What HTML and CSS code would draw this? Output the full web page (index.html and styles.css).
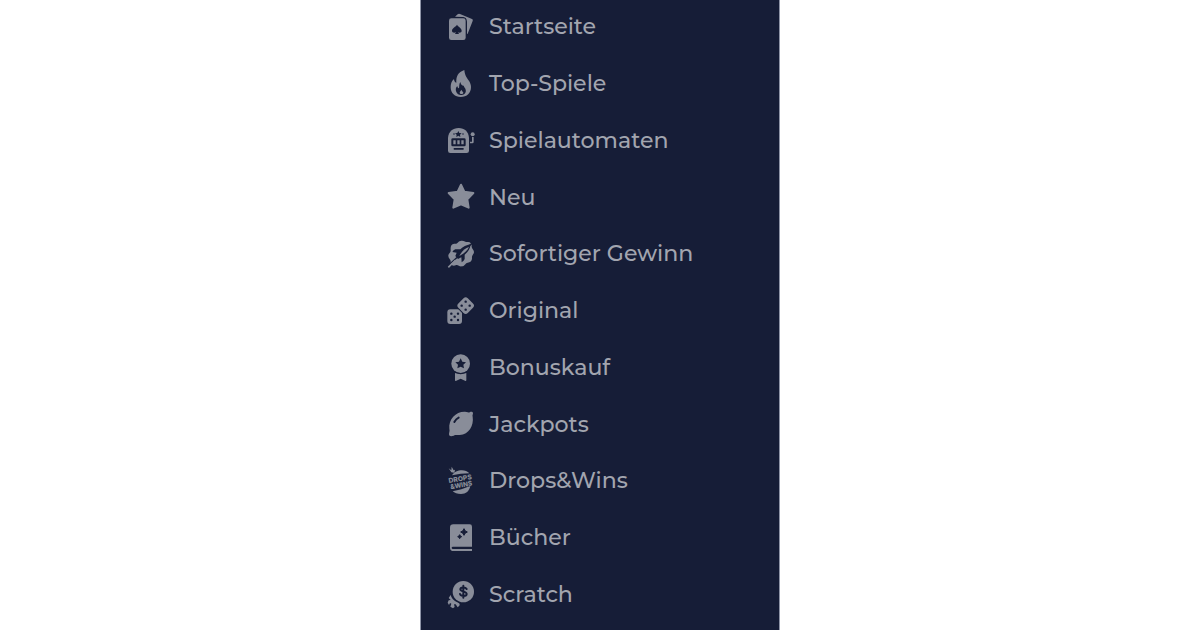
FILE: index.html
```html
<!DOCTYPE html>
<html lang="de">
<head>
  <meta charset="UTF-8">
  <title>Casino Menü</title>
  <link rel="stylesheet" href="styles.css">
</head>
<body>

  <nav class="sidebar">
    <a class="item startseite">
      <svg class="icon" viewBox="0 0 132 132">
        <path d="M45 35L53 28Q56 25 60 27L96 42Q100 44 98 48L83 86Q81 89 81 85V50Q80 37 70 36Z"/>
        <rect x="27" y="40" width="50" height="65" rx="7"/>
        <path class="cut" d="M51 59C54 65 65 69 65 77C65 84 56 84 54 81L57 87H45L48 81C45 84 36 84 36 77C36 69 48 65 51 59Z"/>
      </svg>
      <span>Startseite</span>
    </a>
    <a class="item top-spiele">
      <svg class="icon" viewBox="0 0 132 132">
        <path d="M73 24C54 31 48 43 49 62C44 61 42 55 42 51C34 57 32 66 32 76C32 94 45 105 62 105C81 105 93 93 93 75C93 61 84 54 79 45C75 38 74 32 73 24Z"/>
        <path class="cut" d="M61 60C57 66 58 74 57 79C54 78 52 75 52 72C47 77 46 83 49 90C52 97 58 100 65 99C74 98 79 91 77 83C76 77 72 76 71 71C66 71 62 67 61 60Z"/>
        <path d="M64 83C63 87 59 88 59 92C59 97 70 97 70 92C70 89 67 89 64 83Z"/>
      </svg>
      <span>Top-Spiele</span>
    </a>
    <a class="item spielautomaten">
      <svg class="icon" viewBox="0 0 132 132">
        <path d="M24 56C26 38 38 27 56 27C74 27 85 38 87 56V95Q87 102 80 102H31Q24 102 24 95Z"/>
        <path class="cut" d="M55 36L58 42L65 43L60 47L61 54L55 50L49 54L50 47L45 43L52 42Z"/>
        <circle class="cut" cx="42" cy="45" r="2.2"/>
        <circle class="cut" cx="69" cy="45" r="2.2"/>
        <rect class="cut" x="34" y="58" width="43" height="24" rx="4"/>
        <path d="M40 64h7v12h-7zM52 64h7v12h-7zM64 64h7v12h-7z"/>
        <rect class="cut" x="41" y="87" width="30" height="5" rx="1"/>
        <circle cx="98" cy="46" r="6"/>
        <path d="M96 54h5v15q0 4-4 4h-7v-5h6z"/>
      </svg>
      <span>Spielautomaten</span>
    </a>
    <a class="item neu">
      <svg class="icon" viewBox="0 0 132 132">
        <path class="round" d="M63 29L73 50L100 54L82 73L86 98L63 88L40 98L44 73L26 54L53 50Z"/>
      </svg>
      <span>Neu</span>
    </a>
    <a class="item sofort">
      <svg class="icon" viewBox="0 0 132 132">
        <path d="M44 35C52 37 54 27 64 26C73 25 77 31 83 30C91 29 96 36 95 43C94 50 102 52 102 60C102 67 95 69 96 77C97 86 91 92 83 92C77 92 75 102 66 103C58 105 54 97 47 100C38 104 30 97 32 88C33 83 24 79 25 70C26 63 33 62 32 54C31 43 34 34 44 35Z"/>
        <path class="cut" d="M92 36C79 39 69 44 61 52H46Q40 54 37 60L50 62L46 72L54 81L64 76L65 91Q72 87 74 81L74 68C84 60 91 50 92 36Z"/>
        <path d="M87 45C77 48 68 55 60 68L58 72L62 70C74 63 82 55 87 45Z"/>
        <path class="slash" d="M98 32L90 40M50 77L23 102"/>
        <path class="trail" d="M47 84L25 106"/>
      </svg>
      <span>Sofortiger Gewinn</span>
    </a>
    <a class="item original">
      <svg class="icon" viewBox="0 0 132 132">
        <rect x="22" y="61" width="44" height="44" rx="9"/>
        <rect x="57" y="30" width="40" height="40" rx="9" class="edge" transform="rotate(45 77 50)"/>
        <g class="cut">
          <circle cx="34" cy="74" r="3.6"/>
          <circle cx="54" cy="74" r="3.6"/>
          <circle cx="44" cy="83" r="3.6"/>
          <circle cx="34" cy="93" r="3.6"/>
          <circle cx="54" cy="93" r="3.6"/>
          <circle cx="77" cy="38" r="3.6"/>
          <circle cx="65" cy="50" r="3.6"/>
          <circle cx="89" cy="50" r="3.6"/>
          <circle cx="77" cy="62" r="3.6"/>
        </g>
      </svg>
      <span>Original</span>
    </a>
    <a class="item bonuskauf">
      <svg class="icon" viewBox="0 0 132 132">
        <path d="M45 81Q62 88 79 81V102Q79 106 75 104L62 98L49 104Q45 106 45 102Z"/>
        <circle cx="62" cy="53" r="28" class="edge"/>
        <path class="cut" d="M62 37L67 47L78 49L70 56L72 67L62 62L52 67L54 56L46 49L57 47Z"/>
      </svg>
      <span>Bonuskauf</span>
    </a>
    <a class="item jackpots">
      <svg class="icon" viewBox="0 0 132 132">
        <path d="M83 31C88 33 91 27 97 30C102 33 96 39 98 44C102 71 87 97 59 99C49 100 47 98 41 101C35 103 27 104 27 97C27 91 30 87 28 80C25 52 48 28 75 29Q80 29 83 31Z"/>
        <path class="shine" d="M43 60Q48 51 56 47"/>
      </svg>
      <span>Jackpots</span>
    </a>
    <a class="item drops">
      <svg class="icon" viewBox="0 0 132 132">
        <path d="M36 49C45 32 76 28 88 43L62 44ZM38 97L64 91L91 81C88 96 78 105 63 105C52 105 43 102 38 97Z"/>
        <path d="M26 28L34 34L35 23L41 34L45 32L43 41L34 40Z"/>
        <g class="logo" transform="rotate(-10 62 68)">
          <text x="27" y="66" textLength="70" lengthAdjust="spacingAndGlyphs">DROPS</text>
          <text x="29" y="85" textLength="66" lengthAdjust="spacingAndGlyphs">&amp;WINS</text>
        </g>
      </svg>
      <span>Drops&amp;Wins</span>
    </a>
    <a class="item buecher">
      <svg class="icon" viewBox="0 0 132 132">
        <path d="M40 25H89Q96 25 96 32V92H39Q35 92 35 95Q35 99 39 99H96V105H41Q30 105 30 95V35Q30 25 40 25Z"/>
        <path class="cut star" d="M72 38Q74 46 82 48Q74 50 72 58Q70 50 62 48Q70 46 72 38ZM59 56Q60 61 65 62Q60 63 59 68Q58 63 53 62Q58 61 59 56Z"/>
      </svg>
      <span>Bücher</span>
    </a>
    <a class="item scratch">
      <svg class="icon" viewBox="0 0 132 132">
        <path d="M32 66Q36 82 52 88Q62 92 58 98L53 103L47 94L42 94L44 102L39 106L31 101L34 92L30 90L27 96L23 89L26 82L32 81L26 75Z"/>
        <circle cx="70" cy="56" r="32" class="edge"/>
        <path class="dollar" d="M80 48C77 42 61 41 61 49C61 57 80 53 80 63C80 71 63 71 60 63M70 38V74"/>
      </svg>
      <span>Scratch</span>
    </a>
  </nav>

</body>
</html>
```
FILE: styles.css
```css
body {
  margin: 0;
  background-color: #fff;
  font-family: Montserrat, Inter, sans-serif;
  overflow: hidden;
}

.sidebar {
  box-sizing: border-box;
  width: 360px;
  height: 630px;
  margin-left: 420px;
  padding-left: 19px;
  background-color: #161d37;
  border-left: 1px solid #8f95a8;
  border-right: 1px solid #8f95a8;
  overflow: hidden;
}

.item {
  display: flex;
  align-items: center;
  gap: 5px;
  height: 56.75px;
  color: #a2a5af;
  font-size: 22.1px;
  font-weight: 500;
  line-height: 30px;
  white-space: nowrap;
}

.item:first-child {
  margin-top: -1.3px;
}

.item span {
  margin-top: 0.4px;
}

.icon {
  flex: none;
  width: 44px;
  height: 44px;
  fill: #898d99;
}

.cut {
  fill: #161d37;
}

.edge {
  stroke: #161d37;
  stroke-width: 6;
  paint-order: stroke;
}

.round {
  stroke: #898d99;
  stroke-width: 6;
  stroke-linejoin: round;
}

.star {
  stroke: #161d37;
  stroke-width: 3;
}

.slash,
.shine,
.dollar {
  fill: none;
  stroke: #161d37;
  stroke-width: 4;
  stroke-linecap: round;
}

.shine,
.dollar {
  stroke-width: 6;
}

.trail {
  stroke: #898d99;
  stroke-width: 5;
}

.logo {
  font-family: Inter, sans-serif;
  font-size: 20px;
  font-weight: 800;
}
```
